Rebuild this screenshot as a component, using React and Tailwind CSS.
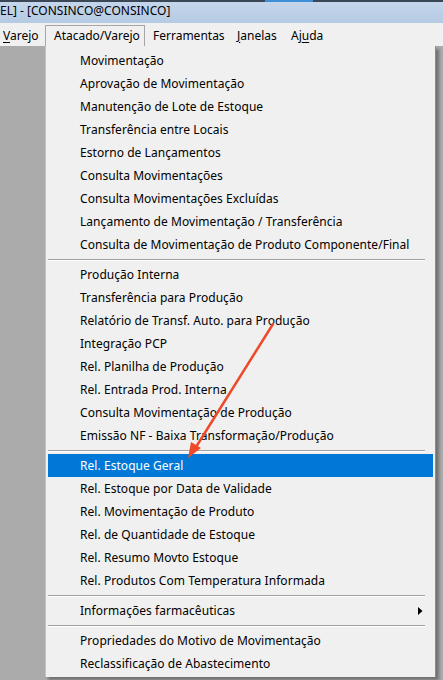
import React from "react";

const groups = [
  [
    "Movimentação",
    "Aprovação de Movimentação",
    "Manutenção de Lote de Estoque",
    "Transferência entre Locais",
    "Estorno de Lançamentos",
    "Consulta Movimentações",
    "Consulta Movimentações Excluídas",
    "Lançamento de Movimentação / Transferência",
    "Consulta de Movimentação de Produto Componente/Final",
  ],
  [
    "Produção Interna",
    "Transferência para Produção",
    "Relatório de Transf. Auto. para Produção",
    "Integração PCP",
    "Rel. Planilha de Produção",
    "Rel. Entrada Prod. Interna",
    "Consulta Movimentação de Produção",
    "Emissão NF - Baixa Transformação/Produção",
  ],
  [
    "Rel. Estoque Geral",
    "Rel. Estoque por Data de Validade",
    "Rel. Movimentação de Produto",
    "Rel. de Quantidade de Estoque",
    "Rel. Resumo Movto Estoque",
    "Rel. Produtos Com Temperatura Informada",
  ],
  ["Informações farmacêuticas"],
  ["Propriedades do Motivo de Movimentação", "Reclassificação de Abastecimento"],
];

function Sep() {
  return (
    <div className="h-[7px] flex flex-col justify-center pl-[2px] pr-[10px]">
      <div className="h-[2px] border-t border-[#a0a0a0] border-b border-b-white" />
    </div>
  );
}

function Item({ label, active, sub }) {
  return (
    <div
      className={
        "h-[23px] mx-[2px] flex items-center pl-[32px] pr-[10px] relative " +
        (active ? "bg-[#0078d7] text-white" : "text-black")
      }
    >
      <span className="leading-none tracking-[0.05px]">{label}</span>
      {sub && (
        <svg
          className="absolute right-[10px] top-[8px]"
          width="5"
          height="8"
          viewBox="0 0 5 8"
        >
          <polygon points="0,0 4.5,4 0,8" fill="#000" />
        </svg>
      )}
    </div>
  );
}

export default function App() {
  return (
    <div
      className="w-[443px] h-[680px] bg-[#ababab] relative overflow-hidden text-[12px]"
      style={{ fontFamily: '"Noto Sans", "Open Sans", sans-serif' }}
    >
      {/* title bar */}
      <div className="h-[23px] relative bg-gradient-to-b from-[#c6d7ec] to-[#b5cae3]">
        <div className="h-[2px] bg-[#3c4756] flex">
          <div className="ml-[265px] w-[48px] bg-[#3f8fd8]" />
        </div>
        <div className="absolute left-0 top-[1px] h-[20px] flex items-center text-[12px] text-black">
          EL] - [CONSINCO@CONSINCO]
        </div>
      </div>
      {/* menu bar */}
      <div className="h-[23px] bg-[#f0f0f0] flex items-end text-black">
        <div className="h-[21px] flex items-center pl-[3px] w-[45px] shrink-0">
          <span>
            <span className="underline underline-offset-2">V</span>arejo
          </span>
        </div>
        <div className="h-[21px] w-[100px] shrink-0 border border-b-0 border-[#a6a6a6] bg-[#f0f0f0] flex items-center pl-[8px]">
          Atacado/Varejo
        </div>
        <div className="h-[21px] flex items-center pl-[8px] w-[92px] shrink-0">
          Ferramentas
        </div>
        <div className="h-[21px] flex items-center w-[54px] shrink-0">
          <span>
            <span className="underline underline-offset-2">J</span>anelas
          </span>
        </div>
        <div className="h-[21px] flex items-center shrink-0">
          <span>
            Aj<span className="underline underline-offset-2">u</span>da
          </span>
        </div>
      </div>
      {/* body */}
      <div className="flex">
        <div className="w-[45px] shrink-0" />
        <div className="w-[391px] shrink-0 bg-[#f0f0f0] border-l border-[#c4c4c4] border-r border-r-[#8c8c8c] pt-[3px] pb-[2px] shadow-[3px_3px_3px_rgba(0,0,0,0.35)]">
          {groups.map((g, gi) => (
            <React.Fragment key={gi}>
              {gi > 0 && <Sep />}
              {g.map((label) => (
                <Item
                  key={label}
                  label={label}
                  active={label === "Rel. Estoque Geral"}
                  sub={label === "Informações farmacêuticas"}
                />
              ))}
            </React.Fragment>
          ))}
        </div>
      </div>
      {/* annotation arrow */}
      <svg
        className="absolute left-0 top-0 pointer-events-none"
        width="443"
        height="680"
        viewBox="0 0 443 680"
      >
        <line
          x1="273"
          y1="324"
          x2="196"
          y2="447"
          stroke="#ec4a2a"
          strokeWidth="2.5"
          strokeLinecap="round"
        />
        <polygon points="188,458 191,442 201,448" fill="#ec4a2a" />
      </svg>
    </div>
  );
}
